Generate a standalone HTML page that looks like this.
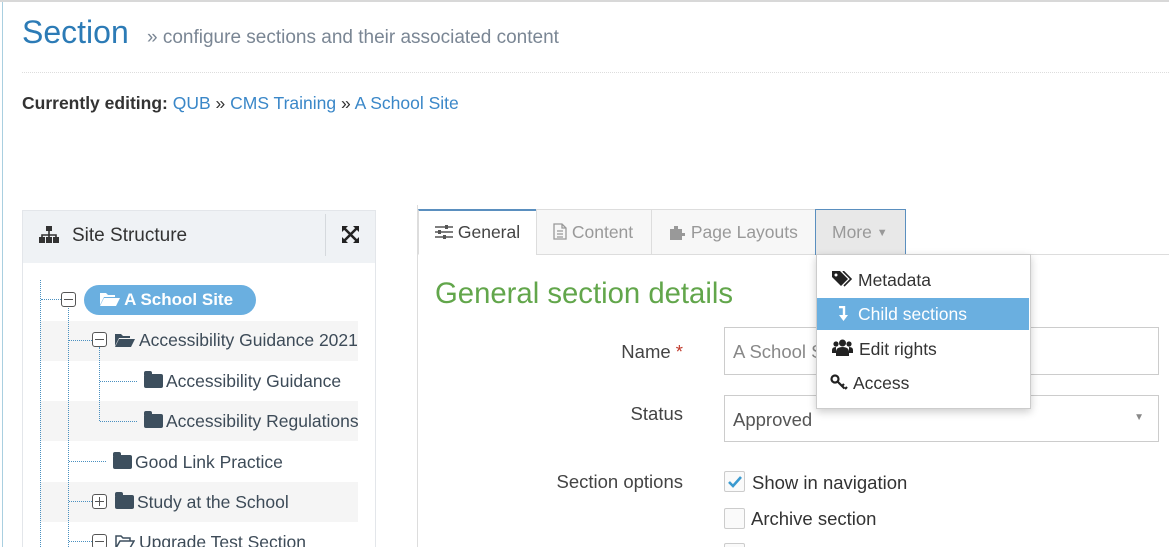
<!DOCTYPE html>
<html style="width:1169px;height:547px;overflow:hidden"><head><meta charset="utf-8"><style>
*{box-sizing:border-box;margin:0;padding:0}
body{width:1169px;height:547px;overflow:hidden;background:#fff;font-family:"Liberation Sans",Arial,sans-serif;position:relative;color:#333}
.a{position:absolute;white-space:nowrap}
.row{position:absolute;left:40px;width:318px;height:40px}
.g{background:#f5f5f5}
.t{position:absolute;font-size:17.5px;color:#3d4b58}
.vl{position:absolute;border-left:1px dotted #4a90c0}
.hl{position:absolute;border-top:1px dotted #4a90c0;height:0}
.box{position:absolute;width:15px;height:15px;border:1.5px solid #555;border-radius:3px;background:#fff}
.box:before{content:"";position:absolute;left:2px;right:2px;top:5.5px;border-top:1.5px solid #555}
.plus:after{content:"";position:absolute;top:2px;bottom:2px;left:5.5px;border-left:1.5px solid #555}
.fold{display:inline-block;width:19px;height:14px;background:#3d4f5e;border-radius:2px;position:relative;margin-right:3px;vertical-align:-1px}
.fold:before{content:"";position:absolute;left:0;top:-3px;width:8px;height:4px;background:#3d4f5e;border-radius:2px 2px 0 0}
.tab{position:absolute;top:209px;height:46px;border:1px solid #ddd;background:#f7f7f7;font-size:17.5px;color:#999;padding:12px 0 0 16px}
.lab{position:absolute;font-size:18.5px;color:#444;text-align:right;right:486px}
.inp{position:absolute;left:724px;width:435px;border:1px solid #ccc;font-size:18.5px;color:#555;padding:0 0 0 8px}
.cb{position:absolute;left:724px;width:21px;height:21px;border:1px solid #ccc;border-radius:2px;background:#fafafa}
</style></head><body>
<div class="a" style="left:0;top:0;width:1169px;height:2px;background:#d8d8d8"></div>
<div class="a" style="left:2px;top:2px;width:1px;height:545px;background:#a9cfe0"></div>
<div class="a" style="left:22px;top:14px;font-size:32px;color:#2c7bb6">Section</div>
<div class="a" style="left:147px;top:27px;font-size:19px;color:#7a8694">» configure sections and their associated content</div>
<div class="a" style="left:22px;top:72px;width:1147px;border-top:1px dotted #ddd"></div>
<div class="a" style="left:22px;top:93px;font-size:17.5px;color:#333"><b>Currently editing:</b> <span style="color:#3a87c8">QUB</span> » <span style="color:#3a87c8">CMS Training</span> » <span style="color:#3a87c8">A School Site</span></div>

<div class="a" style="left:22px;top:210px;width:354px;height:340px;border:1px solid #e3e6ea"></div>
<div class="a" style="left:23px;top:211px;width:352px;height:52px;background:#eff2f5"></div>
<div class="a" style="left:325px;top:214px;width:1px;height:42px;background:#d5d9dd"></div>
<svg class="a" style="left:39px;top:226px" width="20" height="17" viewBox="0 0 20 17"><rect x="7" y="0" width="6" height="5" fill="#333"/><path d="M10 5v4M3 12V9h14v3M10 9v3" stroke="#333" stroke-width="1.6" fill="none"/><rect x="0" y="11" width="6" height="6" fill="#333"/><rect x="7" y="11" width="6" height="6" fill="#333"/><rect x="14" y="11" width="6" height="6" fill="#333"/></svg>
<div class="a" style="left:72px;top:225px;font-size:19px;color:#333">Site Structure</div>
<svg class="a" style="left:342px;top:226px" width="17" height="17" viewBox="0 0 17 17"><path d="M2 2l13 13M15 2L2 15" stroke="#222" stroke-width="2.6"/><path d="M0 0h6L0 6zM17 0h-6l6 6zM0 17h6L0 11zM17 17h-6l6-6z" fill="#222"/></svg>

<div class="row g" style="top:321px"></div>
<div class="row g" style="top:401px"></div>
<div class="row g" style="top:482px"></div>
<div class="vl" style="left:40px;top:280px;height:267px"></div>
<div class="vl" style="left:68px;top:308px;height:239px"></div>
<div class="vl" style="left:99px;top:347px;height:74px"></div>
<div class="hl" style="left:41px;top:299px;width:20px"></div>
<div class="hl" style="left:69px;top:340px;width:23px"></div>
<div class="hl" style="left:100px;top:381px;width:37px"></div>
<div class="hl" style="left:100px;top:421px;width:37px"></div>
<div class="hl" style="left:69px;top:461px;width:37px"></div>
<div class="hl" style="left:69px;top:501px;width:23px"></div>
<div class="hl" style="left:69px;top:541px;width:23px"></div>
<div class="box" style="left:61px;top:292px"></div>
<div class="a" style="left:84px;top:285px;width:172px;height:30px;border-radius:15px;background:#6aafe0;color:#fff;font-weight:bold;font-size:17px;padding:5px 0 0 16px">
<svg width="20" height="14" viewBox="0 0 20 14" style="vertical-align:-1px"><path d="M0 1h6l2 2h7v2H4L0 13z M4 6h16l-4 8H0z" fill="#fff"/></svg> A School Site</div>
<div class="box" style="left:92px;top:332px"></div>
<svg class="a" style="left:115px;top:333px" width="20" height="14" viewBox="0 0 20 14"><path d="M0 1h6l2 2h7v2H4L0 13z M4 6h16l-4 8H0z" fill="#3d4f5e"/></svg>
<div class="t" style="left:139px;top:330px">Accessibility Guidance 2021</div>
<div class="t" style="left:144px;top:371px"><span class="fold"></span>Accessibility Guidance</div>
<div class="t" style="left:144px;top:411px"><span class="fold"></span>Accessibility Regulations</div>
<div class="t" style="left:113px;top:452px"><span class="fold"></span>Good Link Practice</div>
<div class="box plus" style="left:92px;top:494px"></div>
<div class="t" style="left:115px;top:492px"><span class="fold"></span>Study at the School</div>
<div class="box" style="left:92px;top:534px"></div>
<svg class="a" style="left:115px;top:535px" width="20" height="14" viewBox="0 0 20 14"><path d="M1 13V1h5l2 2h7v3M1 13l4-7h14l-4 7z" fill="none" stroke="#3d4f5e" stroke-width="1.5"/></svg>
<div class="t" style="left:139px;top:532px">Upgrade Test Section</div>

<div class="a" style="left:417px;top:205px;width:1px;height:342px;background:#ddd"></div>
<div class="a" style="left:536px;top:254px;width:633px;height:1px;background:#ddd"></div>
<div class="tab" style="left:418px;width:119px;background:#fff;border-color:#ddd;border-bottom-color:#fff;border-top:2px solid #5a8fbf;color:#444;padding-top:11px">
<svg width="18" height="14" viewBox="0 0 18 14" style="vertical-align:-1px"><path d="M0 2h18M0 7h18M0 12h18" stroke="#555" stroke-width="1.4"/><rect x="10" y="0" width="3" height="4" fill="#555"/><rect x="3" y="5" width="3" height="4" fill="#555"/><rect x="8" y="10" width="3" height="4" fill="#555"/></svg> General</div>
<div class="tab" style="left:536px;width:116px"><svg width="14" height="17" viewBox="0 0 14 17" style="vertical-align:-2px"><path d="M1 1h8l4 4v11H1z M9 1v4h4M4 8h6M4 11h6M4 14h6" fill="none" stroke="#999" stroke-width="1.3"/></svg> Content</div>
<div class="tab" style="left:651px;width:165px"><svg width="18" height="16" viewBox="0 0 18 16" style="vertical-align:-2px"><path d="M2 5h4V2h4v3h4v4h3v3h-3v4H2z" fill="#999"/></svg> Page Layouts</div>
<div class="tab" style="left:815px;width:91px;background:#e8e8e8;border-color:#5a8fbf">More <span style="font-size:11px;vertical-align:2px">▼</span></div>

<div class="a" style="left:435px;top:277px;font-size:29.3px;color:#62a64b">General section details</div>
<div class="lab" style="top:341px">Name <span style="color:#c0392b">*</span></div>
<div class="lab" style="top:403px">Status</div>
<div class="lab" style="top:471px">Section options</div>
<div class="inp" style="top:327px;height:48px;padding-top:13px;color:#888">A School Site</div>
<div class="inp" style="top:395px;height:47px;padding-top:13px">Approved<span style="position:absolute;right:14px;top:16px;font-size:10px;color:#888">▼</span></div>
<div class="cb" style="top:471px"><svg width="19" height="19" viewBox="0 0 19 19"><path d="M4 10l4 4 8-9" stroke="#3a9ad0" stroke-width="2.6" fill="none"/></svg></div>
<div class="a" style="left:752px;top:472px;font-size:18.5px;color:#333">Show in navigation</div>
<div class="cb" style="top:508px"></div>
<div class="a" style="left:751px;top:508px;font-size:18.5px;color:#333">Archive section</div>
<div class="cb" style="top:543px"></div>

<div class="a" style="left:816px;top:254px;width:215px;height:155px;background:#fff;border:1px solid #ccc;box-shadow:0 3px 8px rgba(0,0,0,.2)"></div>
<div class="a" style="left:817px;top:298px;width:212px;height:32px;background:#6aafe0"></div>
<svg class="a" style="left:832px;top:271px" width="20" height="17" viewBox="0 0 20 17"><path d="M0 0h8l8 8-7 7-9-9z" fill="#222"/><path d="M11 0l8 8-7 7" stroke="#222" stroke-width="1.6" fill="none"/><circle cx="4" cy="4" r="1.5" fill="#fff"/></svg>
<div class="a" style="left:858px;top:270px;font-size:17.5px;color:#333">Metadata</div>
<svg class="a" style="left:838px;top:306px" width="10" height="16" viewBox="0 0 10 16"><path d="M1 1h5v9" stroke="#fff" stroke-width="2.4" fill="none"/><path d="M1 9h9l-4.5 6z" fill="#fff"/></svg>
<div class="a" style="left:858px;top:304px;font-size:17.5px;color:#fff">Child sections</div>
<svg class="a" style="left:832px;top:339px" width="21" height="17" viewBox="0 0 21 17"><circle cx="10.5" cy="4" r="3.5" fill="#222"/><circle cx="4" cy="5" r="2.6" fill="#222"/><circle cx="17" cy="5" r="2.6" fill="#222"/><path d="M4 17v-4q0-5 6.5-5t6.5 5v4z M0 14v-3q0-3 4-3v6z M21 14v-3q0-3-4-3v6z" fill="#222"/></svg>
<div class="a" style="left:859px;top:339px;font-size:17.5px;color:#333">Edit rights</div>
<svg class="a" style="left:830px;top:374px" width="20" height="16" viewBox="0 0 20 16"><circle cx="5" cy="5" r="3.5" fill="none" stroke="#222" stroke-width="2.2"/><path d="M7.5 7.5l7 7M12 12l2-2M15 15l2-2" stroke="#222" stroke-width="2.2"/></svg>
<div class="a" style="left:853px;top:373px;font-size:17.5px;color:#333">Access</div>
</body></html>
